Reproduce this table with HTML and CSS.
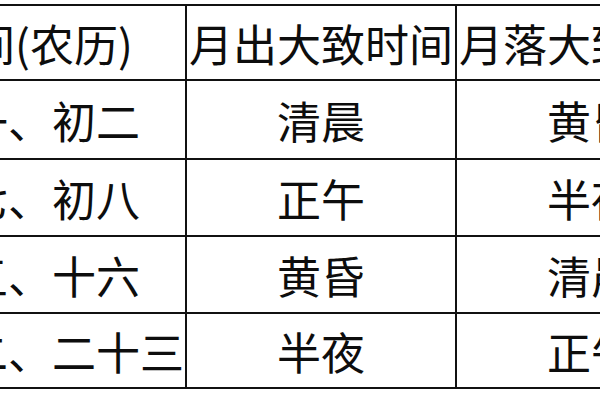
FILE: index.html
```html
<!DOCTYPE html>
<html lang="zh">
<head>
<meta charset="utf-8">
<link rel="stylesheet" href="styles.css">
</head>
<body>
<div class="sheet">
  <div class="cell">时间(农历)</div>
  <div class="cell">月出大致时间</div>
  <div class="cell">月落大致时间</div>

  <div class="cell">初一、初二</div>
  <div class="cell">清晨</div>
  <div class="cell">黄昏</div>

  <div class="cell">初七、初八</div>
  <div class="cell">正午</div>
  <div class="cell">半夜</div>

  <div class="cell">十五、十六</div>
  <div class="cell">黄昏</div>
  <div class="cell">清晨</div>

  <div class="cell">二十二、二十三</div>
  <div class="cell">半夜</div>
  <div class="cell">正午</div>
</div>
</body>
</html>
```
FILE: styles.css
```css
html, body {
  margin: 0;
  padding: 0;
  background: #fff;
  overflow: hidden;
}

.sheet {
  display: grid;
  grid-template-columns: 310px 268px 268px;
  grid-template-rows: 73px 77px 75px 75px 73px;
  gap: 2px;
  padding: 2px;
  background: #111;
  width: max-content;
  margin-top: 4px;
  margin-left: -127px;
}

.cell {
  background: #fff;
  display: flex;
  align-items: center;
  justify-content: center;
  white-space: nowrap;
  font-family: "Noto Sans CJK SC", "Noto Sans", sans-serif;
  font-size: 44px;
  color: #0d0d0d;
  line-height: 1;
}
```
